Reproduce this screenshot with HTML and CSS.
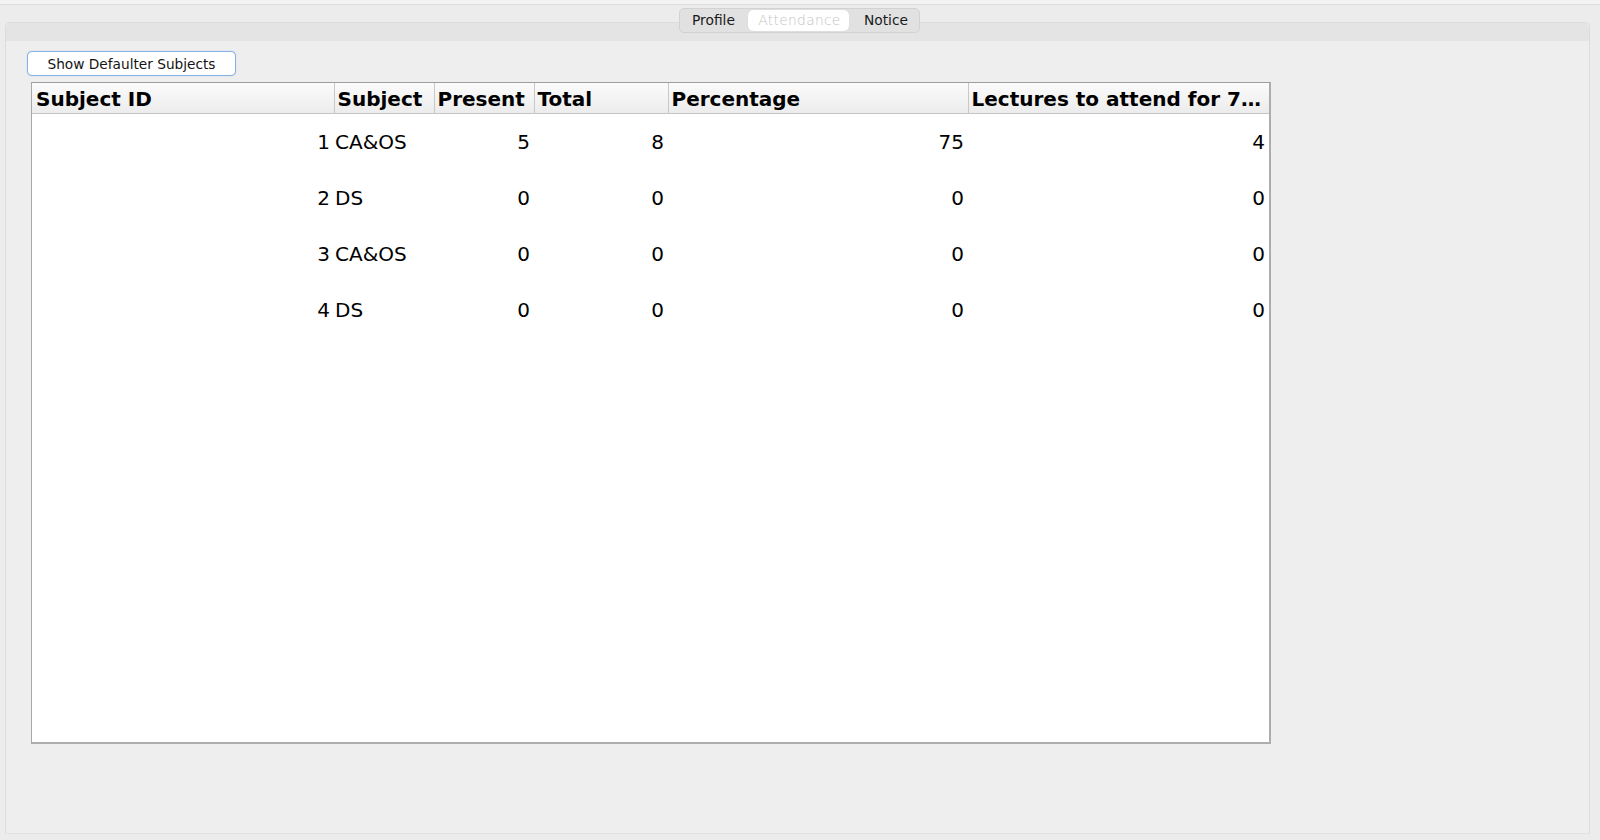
FILE: index.html
```html
<!DOCTYPE html>
<html>
<head>
<meta charset="utf-8">
<title>Attendance</title>
<link rel="stylesheet" href="styles.css">
</head>
<body>
<div class="window">
  <div class="topbar"></div>
  <div class="tabs-row">
    <div class="tabs">
      <div class="tab">Profile</div>
      <div class="tab tab-selected">Attendance</div>
      <div class="tab tab-notice">Notice</div>
    </div>
  </div>
  <div class="pane">
    <div class="pane-strip"></div>
    <div class="pane-body">
      <button class="btn">Show Defaulter Subjects</button>
      <div class="scroll">
        <table class="grid">
          <colgroup>
            <col class="c1"><col class="c2"><col class="c3"><col class="c4"><col class="c5"><col class="c6">
          </colgroup>
          <thead>
            <tr>
              <th>Subject ID</th>
              <th>Subject</th>
              <th>Present</th>
              <th>Total</th>
              <th>Percentage</th>
              <th>Lectures to attend for 7…</th>
            </tr>
          </thead>
          <tbody>
            <tr><td class="num">1</td><td class="txt">CA&amp;OS</td><td class="num">5</td><td class="num">8</td><td class="num">75</td><td class="num">4</td></tr>
            <tr><td class="num">2</td><td class="txt">DS</td><td class="num">0</td><td class="num">0</td><td class="num">0</td><td class="num">0</td></tr>
            <tr><td class="num">3</td><td class="txt">CA&amp;OS</td><td class="num">0</td><td class="num">0</td><td class="num">0</td><td class="num">0</td></tr>
            <tr><td class="num">4</td><td class="txt">DS</td><td class="num">0</td><td class="num">0</td><td class="num">0</td><td class="num">0</td></tr>
          </tbody>
        </table>
      </div>
    </div>
  </div>
</div>
</body>
</html>
```

FILE: styles.css
```css
html, body {
  margin: 0;
  padding: 0;
  background: #ececec;
}

body {
  font-family: "DejaVu Sans", "Liberation Sans", sans-serif;
  color: #000;
  width: 1600px;
  height: 840px;
  overflow: hidden;
}

.window {
  width: 1600px;
  height: 840px;
  display: flex;
  flex-direction: column;
  background: #ececec;
}

.topbar {
  height: 4px;
  background: #f3f3f3;
  border-bottom: 1px solid #dcdcdc;
  flex: none;
}

.tabs-row {
  display: flex;
  justify-content: center;
  padding: 3px 7px 0 5px;
  position: relative;
  z-index: 2;
  flex: none;
}

.tabs {
  display: flex;
  height: 23px;
  border: 1px solid #d2d2d2;
  border-radius: 5px;
  background: #e1e1e1;
  box-sizing: content-box;
}

.tab {
  font-size: 13.8px;
  line-height: 23px;
  color: #1a1a1a;
  text-align: center;
}

.tab:nth-child(1) { width: 68px; }
.tab:nth-child(2) { width: 101px; }
.tab:nth-child(3) { width: 70px; }

.tab-notice {
  padding-left: 5px;
  box-sizing: border-box;
}

.tab-selected {
  background: #ffffff;
  color: #c4c4c4;
  border-radius: 5px;
  margin: 1px 0;
  line-height: 21px;
  font-weight: 300;
  letter-spacing: 0.3px;
  padding-left: 3px;
  box-sizing: border-box;
  box-shadow: 0 0 1px rgba(0,0,0,0.15);
}

.pane {
  margin: -11px 10px 6px 5px;
  flex: 1;
  border: 1px solid #dcdcdc;
  border-bottom-color: #e2e2e2;
  border-radius: 5px 5px 0 0;
  background: #eeeeee;
  display: flex;
  flex-direction: column;
  position: relative;
  z-index: 1;
}

.pane-strip {
  height: 18px;
  background: #e4e4e4;
  border-radius: 5px 5px 0 0;
  flex: none;
}

.pane-body {
  padding: 10px 0 0 21px;
  display: flex;
  flex-direction: column;
  align-items: flex-start;
}

.btn {
  width: 209px;
  height: 25px;
  font-family: "DejaVu Sans", "Liberation Sans", sans-serif;
  font-size: 13.7px;
  color: #141414;
  background: #ffffff;
  border: 1px solid #86b2e6;
  border-radius: 5px;
  box-shadow: 0 0 1px rgba(90, 150, 230, 0.6);
  padding: 0;
  line-height: 22px;
}

.scroll {
  margin: 6px 0 0 4px;
  width: 1237px;
  height: 659px;
  background: #ffffff;
  border-top: 1px solid #9e9e9e;
  border-left: 1px solid #a8a8a8;
  border-right: 2px solid #adadad;
  border-bottom: 2px solid #adadad;
  overflow: hidden;
}

.grid {
  border-collapse: collapse;
  table-layout: fixed;
  width: 1237px;
}

.c1 { width: 302px; }
.c2 { width: 100px; }
.c3 { width: 100px; }
.c4 { width: 134px; }
.c5 { width: 300px; }
.c6 { width: 301px; }

.grid th {
  height: 30px;
  box-sizing: border-box;
  padding: 3px 0 0 3px;
  text-align: left;
  font-size: 20px;
  font-weight: bold;
  white-space: nowrap;
  overflow: hidden;
  background: linear-gradient(#fbfbfb, #ececec);
  border-bottom: 1px solid #c4c4c4;
  border-left: 1px solid #c8c8c8;
  line-height: 26px;
}

.grid th:first-child {
  border-left: none;
  padding-left: 4px;
}

.grid td {
  height: 56px;
  box-sizing: border-box;
  padding: 2px 0 0 0;
  font-size: 20px;
  white-space: nowrap;
  vertical-align: middle;
}

.grid td.num {
  text-align: right;
  padding-right: 4px;
}

.grid td.txt {
  text-align: left;
  padding-left: 1px;
}
```
